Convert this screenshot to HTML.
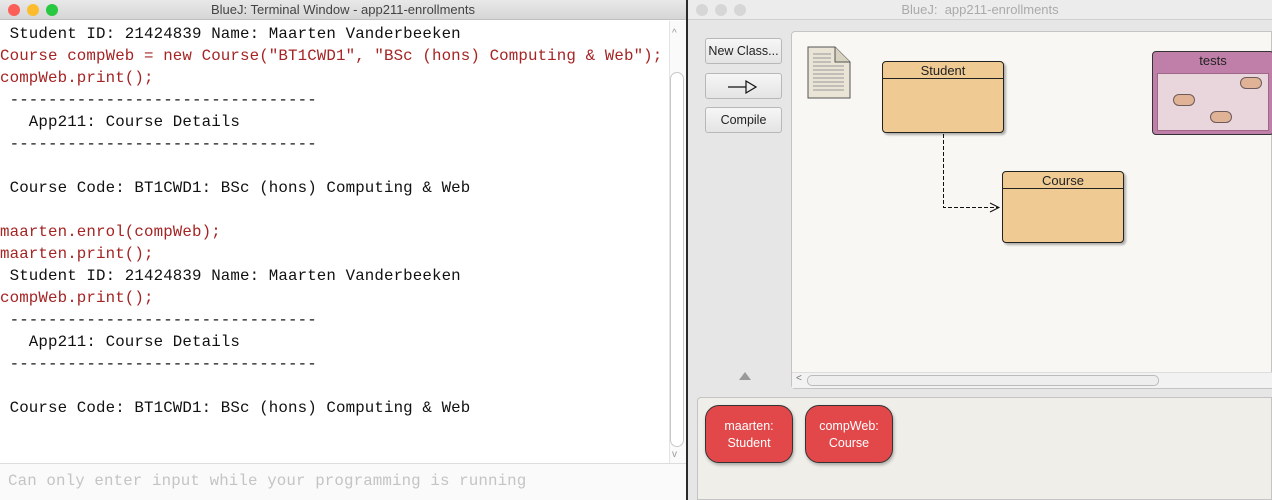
<!DOCTYPE html>
<html><head><style>
*{margin:0;padding:0;box-sizing:border-box}
body{width:1272px;height:500px;overflow:hidden;background:#2a2a2a;position:relative;font-family:"Liberation Sans",sans-serif}
.abs{position:absolute}
#term{left:0;top:0;width:686px;height:500px;background:#fff}
.tb{height:20px;background:linear-gradient(#e9e9e9,#d6d6d6);border-bottom:1px solid #c0c0c0;text-align:center;font-size:13px;line-height:20px;color:#444}
.dot{position:absolute;top:4px;width:12px;height:12px;border-radius:50%}
pre{position:absolute;left:0;top:23px;font-family:"Liberation Mono",monospace;font-size:15.8px;letter-spacing:0.12px;line-height:22px;color:#111}
.r{color:#a52424}
#bj{left:688px;top:0;width:584px;height:500px;background:#e6e6e6}
.btn{position:absolute;left:17px;width:77px;height:26px;border:1px solid #b8b8b8;border-radius:3px;background:linear-gradient(#f6f6f6,#e4e4e4);font-size:12.5px;text-align:center;line-height:24px;color:#222}
.cls{position:absolute;background:#efca93;border:1.5px solid #222;border-radius:4px;box-shadow:2px 2px 2px rgba(0,0,0,.3)}
.cls div{height:17px;border-bottom:1.5px solid #222;text-align:center;font-size:13px;line-height:17px;color:#222}
.obj{position:absolute;top:405px;width:88px;height:58px;background:#e2474a;border:1.5px solid #333;border-radius:14px;color:#fff;font-size:12.5px;text-align:center;line-height:17px;padding-top:12px;box-shadow:1px 2px 3px rgba(0,0,0,.3)}
.pill{position:absolute;width:22px;height:12px;background:#e1b396;border:1.5px solid #6d5a5a;border-radius:6px}
</style></head><body>
<div id="term" class="abs">
 <div class="tb">BlueJ: Terminal Window - app211-enrollments</div>
 <div class="dot" style="left:8px;background:#fc5f57"></div>
 <div class="dot" style="left:27px;background:#fdbc2e"></div>
 <div class="dot" style="left:46px;background:#28c840"></div>
<pre> Student ID: 21424839 Name: Maarten Vanderbeeken
<span class="r">Course compWeb = new Course("BT1CWD1", "BSc (hons) Computing &amp; Web");
compWeb.print();</span>
 --------------------------------
   App211: Course Details
 --------------------------------

 Course Code: BT1CWD1: BSc (hons) Computing &amp; Web

<span class="r">maarten.enrol(compWeb);
maarten.print();</span>
 Student ID: 21424839 Name: Maarten Vanderbeeken
<span class="r">compWeb.print();</span>
 --------------------------------
   App211: Course Details
 --------------------------------

 Course Code: BT1CWD1: BSc (hons) Computing &amp; Web</pre>
 <div class="abs" style="left:669px;top:21px;width:17px;height:443px;background:#fafafa;border-left:1px solid #e4e4e4"></div>
 <div class="abs" style="left:672px;top:28px;font-size:10px;color:#999">^</div>
 <div class="abs" style="left:670px;top:72px;width:14px;height:375px;border:1px solid #c8c8c8;border-radius:7px;background:#fff"></div>
 <div class="abs" style="left:672px;top:449px;font-size:10px;color:#999">v</div>
 <div class="abs" style="left:0;top:463px;width:686px;height:37px;background:#fafafa;border-top:1px solid #ddd;font-family:'Liberation Mono',monospace;font-size:15.8px;letter-spacing:0.12px;color:#c4c4c4;padding:8px 0 0 8px">Can only enter input while your programming is running</div>
</div>
<div id="bj" class="abs">
 <div class="tb" style="color:#aaa;background:#ececec;border-bottom:1px solid #d0d0d0">BlueJ:&nbsp; app211-enrollments</div>
 <div class="dot" style="left:8px;background:#d6d6d6"></div>
 <div class="dot" style="left:27px;background:#d6d6d6"></div>
 <div class="dot" style="left:46px;background:#d6d6d6"></div>
 <div class="btn" style="top:38px">New Class...</div>
 <div class="btn" style="top:73px"><svg width="40" height="20" style="margin-top:3px"><path d="M4 10H22M22 4L32 10L22 16Z" fill="none" stroke="#111" stroke-width="1.2"/></svg></div>
 <div class="btn" style="top:107px">Compile</div>
 <div class="abs" style="left:51px;top:372px;width:0;height:0;border-left:6px solid transparent;border-right:6px solid transparent;border-bottom:8px solid #999"></div>
 <div class="abs" style="left:103px;top:31px;width:481px;height:358px;background:#f8f7f3;border:1px solid #c4c4c4;border-radius:4px 0 0 4px"></div>
 <div class="abs" style="left:104px;top:372px;width:480px;height:16px;background:#f2f2f2;border-top:1px solid #ddd"></div>
 <div class="abs" style="left:108px;top:373px;font-size:10px;color:#777">&lt;</div>
 <div class="abs" style="left:119px;top:375px;width:352px;height:11px;border:1px solid #bbb;border-radius:5px;background:#eee"></div>
 <svg class="abs" style="left:118px;top:45px" width="46" height="56"><path d="M2 2H29L44 17V53H2Z" fill="#e9e4d6" stroke="#555" stroke-width="1"/><path d="M29 2V17H44" fill="#d8d2c0" stroke="#555"/><g stroke="#999"><path d="M7 9H25M7 13H25M7 17H25M7 21H38M7 25H38M7 29H38M7 33H38M7 37H38M7 41H38M7 45H38"/></g></svg>
 <div class="cls" style="left:194px;top:61px;width:122px;height:72px"><div>Student</div></div>
 <div class="cls" style="left:314px;top:171px;width:122px;height:72px"><div>Course</div></div>
 <svg class="abs" style="left:250px;top:134px" width="70" height="80"><path d="M5.5 0V73.5H60" fill="none" stroke="#111" stroke-dasharray="4 2"/><path d="M52 69L61 73.5L52 78" fill="none" stroke="#111"/></svg>
 <div class="abs" style="left:464px;top:51px;width:122px;height:84px;background:#c07fa8;border:1.5px solid #333;border-radius:4px">
  <div style="text-align:center;font-size:13px;color:#222;line-height:17px">tests</div>
  <div style="position:absolute;left:4px;top:21px;width:112px;height:58px;background:#e8d6dc;border:1px solid #a06888"></div>
 </div>
 <div class="pill" style="left:485px;top:94px"></div>
 <div class="pill" style="left:552px;top:77px"></div>
 <div class="pill" style="left:522px;top:111px"></div>
 <div class="abs" style="left:9px;top:397px;width:575px;height:103px;background:#efeee9;border:1px solid #c4c4c4;border-radius:4px 0 0 0"></div>
 <div class="obj" style="left:17px">maarten:<br>Student</div>
 <div class="obj" style="left:117px">compWeb:<br>Course</div>
</div>
</body></html>
